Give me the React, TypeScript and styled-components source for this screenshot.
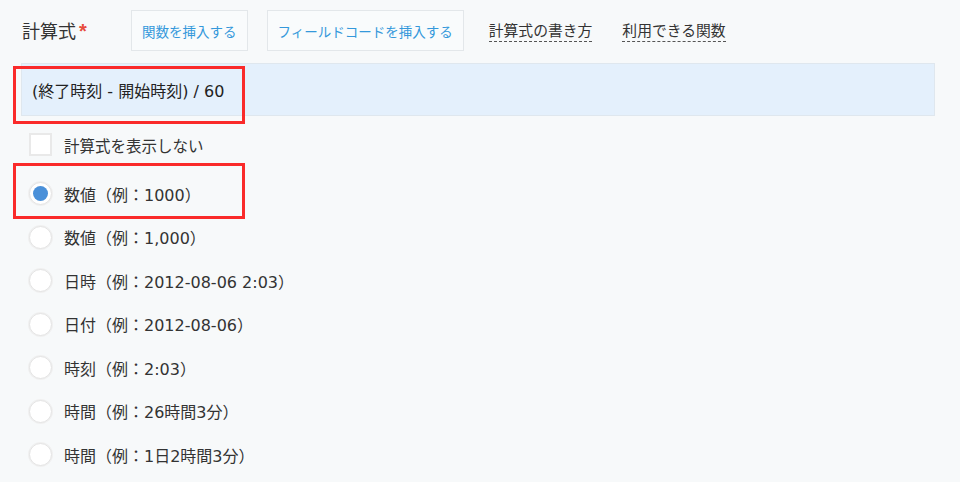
import React from "react";
import styled, { createGlobalStyle } from "styled-components";

const GlobalStyle = createGlobalStyle`
  html, body {
    margin: 0;
    padding: 0;
    background: #f7f9fa;
  }
  body {
    font-family: "DejaVu Sans", "Noto Sans CJK JP", sans-serif;
    color: #333333;
  }
`;

const Page = styled.div`
  width: 960px;
  height: 482px;
  box-sizing: border-box;
  padding: 10px 25px 0 21px;
  background: #f7f9fa;
  overflow: hidden;
`;

const Header = styled.div`
  display: flex;
  align-items: center;
  height: 41px;
`;

const Label = styled.div`
  width: 109px;
  font-size: 18px;
  line-height: 1;
  color: #333;
  display: flex;
  align-items: flex-start;
  margin-left: 1px;
  margin-top: 2px;
`;

const Required = styled.span`
  color: #e74c3c;
  font-family: "Liberation Sans", sans-serif;
  font-size: 20px;
  font-weight: bold;
  margin-left: 3px;
  margin-top: -2px;
`;

const ToolButton = styled.button`
  height: 41px;
  box-sizing: border-box;
  padding: 0 10px;
  margin-right: 19px;
  border: 1px solid #e3e7ea;
  background: #f9fbfc;
  color: #3498db;
  font-family: inherit;
  font-size: 13.5px;
  cursor: pointer;
`;

const HelpLink = styled.span<{ $gap: number }>`
  margin-left: ${(p) => p.$gap}px;
  font-size: 14.8px;
  color: #333;
  line-height: 20px;
  border-bottom: 1px dashed #555;
  margin-top: 2px;
`;

const Highlight = styled.div<{ $top: number; $bottom: number }>`
  position: relative;
  &::after {
    content: "";
    position: absolute;
    left: -8px;
    top: ${(p) => p.$top}px;
    bottom: ${(p) => p.$bottom}px;
    width: 232px;
    box-sizing: border-box;
    border: 3px solid #fa2a2a;
    pointer-events: none;
  }
`;

const FormulaBox = styled.div`
  margin-top: 12px;
  height: 53px;
  box-sizing: border-box;
  border: 1px solid #dfe7ee;
  background: #e4f0fc;
  display: flex;
  align-items: center;
  padding-left: 10px;
  font-size: 16px;
  color: #222;
`;

const CheckRow = styled.label`
  display: flex;
  align-items: center;
  margin-top: 17px;
  height: 23px;
  padding-left: 8px;
  font-size: 15.5px;
  color: #333;
`;

const CheckBox = styled.span`
  width: 23px;
  height: 23px;
  box-sizing: border-box;
  background: #fff;
  border: 2px solid #e9e9e9;
  margin-right: 12px;
  flex-shrink: 0;
`;

const RadioList = styled.div`
  margin-top: 16px;
  display: flex;
  flex-direction: column;
`;

const RadioRow = styled.label`
  display: flex;
  align-items: center;
  height: 43.5px;
  padding-left: 8px;
  font-size: 16px;
  color: #333;
`;

const Radio = styled.span<{ $checked: boolean }>`
  width: 23px;
  height: 23px;
  box-sizing: border-box;
  border-radius: 50%;
  background: #fff;
  border: 1px solid #e4e4e4;
  box-shadow: 0 0 0 1px #f0f0f0;
  margin-right: 12px;
  flex-shrink: 0;
  display: flex;
  align-items: center;
  justify-content: center;
  &::after {
    content: "";
    width: 15px;
    height: 15px;
    border-radius: 50%;
    background: #4a90d9;
    display: ${(p) => (p.$checked ? "block" : "none")};
  }
`;

const options = [
  "数値（例：1000）",
  "数値（例：1,000）",
  "日時（例：2012-08-06 2:03）",
  "日付（例：2012-08-06）",
  "時刻（例：2:03）",
  "時間（例：26時間3分）",
  "時間（例：1日2時間3分）",
];

export default function App() {
  return (
    <>
      <GlobalStyle />
      <Page>
        <Header>
          <Label>
            計算式<Required>*</Required>
          </Label>
          <ToolButton>関数を挿入する</ToolButton>
          <ToolButton>フィールドコードを挿入する</ToolButton>
          <HelpLink $gap={6}>計算式の書き方</HelpLink>
          <HelpLink $gap={30}>利用できる関数</HelpLink>
        </Header>
        <Highlight $top={3} $bottom={-8}>
          <FormulaBox>(終了時刻 - 開始時刻) / 60</FormulaBox>
        </Highlight>
        <CheckRow>
          <CheckBox />
          計算式を表示しない
        </CheckRow>
        <RadioList>
          {options.map((o, i) =>
            i === 0 ? (
              <Highlight key={o} $top={-9} $bottom={-3}>
                <RadioRow>
                  <Radio $checked />
                  {o}
                </RadioRow>
              </Highlight>
            ) : (
              <RadioRow key={o}>
                <Radio $checked={false} />
                {o}
              </RadioRow>
            )
          )}
        </RadioList>
      </Page>
    </>
  );
}
